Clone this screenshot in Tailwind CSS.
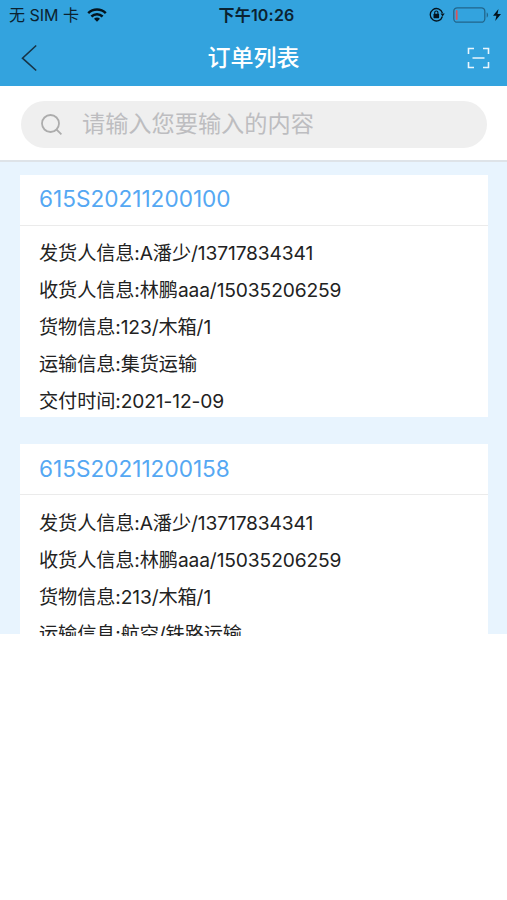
<!DOCTYPE html>
<html lang="zh-CN">
<head>
  <meta charset="UTF-8">
  <meta name="viewport" content="width=device-width, initial-scale=1.0">
  <title>订单列表</title>
  <script src="https://cdn.jsdelivr.net/npm/@tailwindcss/browser@4"></script>
</head>
<body class="bg-white text-[#222] font-['Inter','Noto_Sans_CJK_SC',sans-serif]">
  <div class="w-[507px] h-[900px] overflow-hidden">
    <header class="h-[86px] bg-[#33a3de]">
      <!-- Status bar -->
      <div class="grid grid-cols-3 items-center h-[30px] text-[#0b2230]">
        <div class="flex items-center pl-[9px] text-[16px] whitespace-nowrap">
          <span class="pb-px">无 SIM 卡</span>
          <svg class="ml-2 w-5 h-[14px]" viewBox="0 0 20 14" fill="none" stroke="#04141e" stroke-width="2.5">
            <path d="M1.2 5.1C6.2.3 13.8.3 18.8 5.1" />
            <path d="M4.4 8.5c3.2-3 8-3 11.2 0" />
            <path d="M7 10.7c1.700-1.600 4.300-1.600 6 0L10 13.800z" fill="#04141e" stroke="none" />
          </svg>
        </div>
        <div class="text-center text-[16px] tracking-[0.2px] font-semibold whitespace-nowrap pl-1.5 pb-px">下午10:26</div>
        <div class="flex items-center justify-end pr-[6px]">
          <svg class="w-4 h-4" viewBox="0 0 16 16" fill="none" stroke="#04141e">
            <path d="M13.400 9.500A6.200 6.200 0 1 1 13.400 6" stroke-width="1.300" />
            <path d="M11.500 6.500h4.200l-2.100 3z" fill="#04141e" stroke="none" />
            <rect x="4.500" y="6.800" width="5.600" height="4.400" rx=".6" fill="#04141e" stroke="none" />
            <path d="M5.700 7V5.600a1.600 1.600 0 0 1 3.200 0V7" stroke-width="1.100" />
          </svg>
          <svg class="ml-2 w-9 h-4" viewBox="0 0 36 16" fill="none">
            <rect x=".8" y=".8" width="31" height="14.400" rx="3.500" stroke="#22658b" stroke-width="1.300" />
            <rect x="2.800" y="3" width="1.800" height="10" rx=".9" fill="#d8555c" />
            <path d="M33.700 5.500c1.800.6 1.800 4.400 0 5z" fill="#22658b" />
          </svg>
          <svg class="ml-1 w-2 h-3" viewBox="0 0 8 12" fill="#04141e">
            <path d="M5.500 0L0 6.800h3.400L2.200 12 8 4.900H4.500z" />
          </svg>
        </div>
      </div>
      <!-- Nav bar -->
      <div class="grid grid-cols-3 items-center h-[56px]">
        <svg class="ml-[21px] w-4 h-7" viewBox="0 0 16 28" fill="none" stroke="#173447" stroke-width="1.600">
          <path d="M15.200 1.500L1.500 14.200l13.700 12.300" />
        </svg>
        <h1 class="text-center text-[23px] leading-[56px] font-medium text-white">订单列表</h1>
        <svg class="justify-self-end mr-[17px] w-[23px] h-[22px]" viewBox="0 0 23 22" fill="none" stroke="#e9f6fd" stroke-width="1.600">
          <path d="M1.500 7V1.500H7M16 1.500h5.500V7M21.500 15v5.500H16M7 20.500H1.500V15M5.500 11h12" />
        </svg>
      </div>
    </header>

    <!-- Search -->
    <div class="h-[76px] px-[21px] pt-[15px] border-b-2 border-[#dee3e8]">
      <div class="flex items-center w-[466px] h-[47px] pl-5 rounded-full bg-[#efefef]">
        <svg class="w-[21px] h-[21px]" viewBox="0 0 21 21" fill="none" stroke="#acacac" stroke-width="1.800">
          <circle cx="9.500" cy="9.500" r="8.500" />
          <path d="M15.600 15.600l4.800 4.800" />
        </svg>
        <span class="ml-5 pb-px text-[23.200px] font-normal text-[#bdbdc0]">请输入您要输入的内容</span>
      </div>
    </div>

    <!-- Orders -->
    <main class="h-[472px] px-5 pt-[13px] bg-[#e8f4fe]">
      <section class="w-[468px] h-[242px] bg-white overflow-hidden">
        <h2 class="h-[51px] pl-[19px] border-b border-[#ebebeb] text-[22.600px] leading-[48px] text-[#55a8f3]">615S20211200100</h2>
        <div class="pl-[19px] pt-[9px] text-[19.200px] tracking-[-0.12px] leading-[37px] whitespace-nowrap">
          <p>发货人信息:A潘少/13717834341</p>
          <p>收货人信息:林鹏aaa/15035206259</p>
          <p>货物信息:123/木箱/1</p>
          <p>运输信息:集货运输</p>
          <p>交付时间:2021-12-09</p>
        </div>
      </section>
      <section class="mt-[27px] w-[468px] h-[192px] bg-white overflow-hidden">
        <h2 class="h-[51px] pl-[19px] border-b border-[#ebebeb] text-[22.600px] leading-[49px] text-[#55a8f3]">615S20211200158</h2>
        <div class="pl-[19px] pt-[10px] text-[19.200px] tracking-[-0.12px] leading-[37px] whitespace-nowrap">
          <p>发货人信息:A潘少/13717834341</p>
          <p>收货人信息:林鹏aaa/15035206259</p>
          <p>货物信息:213/木箱/1</p>
          <p>运输信息:航空/铁路运输</p>
        </div>
      </section>
    </main>
  </div>
</body>
</html>
